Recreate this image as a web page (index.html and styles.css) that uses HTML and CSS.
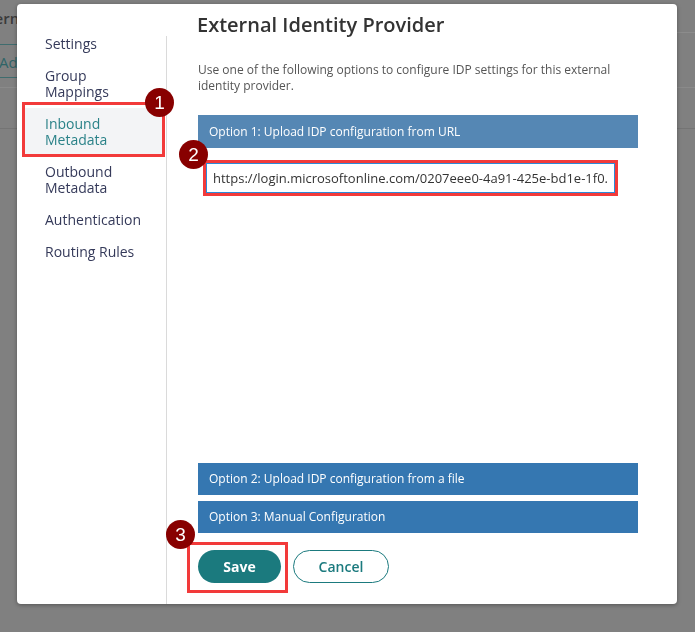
FILE: index.html
```html
<!DOCTYPE html>
<html lang="en">

<head>
    <meta charset="UTF-8">
    <meta name="viewport" content="width=device-width, initial-scale=1.0">
    <title>External Identity Provider</title>
    <link rel="stylesheet" href="styles.css">
</head>

<body>

    <!-- page behind the dialog, dimmed -->
    <div class="page">
        <div class="page-head">
            <div class="page-title">External Identity Providers</div>
            <div class="page-tools"></div>
        </div>
        <div class="page-toolbar">
            <span class="page-add">Add</span>
        </div>
        <div class="page-row"></div>
        <div class="page-row"></div>
    </div>

    <div class="modal">
        <div class="side">
            <ul>
                <li>Settings</li>
                <li>Group Mappings</li>
                <li class="active">Inbound Metadata</li>
                <li>Outbound Metadata</li>
                <li>Authentication</li>
                <li>Routing Rules</li>
            </ul>
        </div>

        <div class="content">
            <h1>External Identity Provider</h1>
            <p class="intro">Use one of the following options to configure IDP settings for this external identity provider.</p>

            <div class="option option-open">Option 1: Upload IDP configuration from URL</div>
            <div class="mark-field">
                <input class="url" type="text" value="https://login.microsoftonline.com/0207eee0-4a91-425e-bd1e-1f0.3b5c7d9e/federationmetadata/2007-06/federationmetadata.xml">
            </div>

            <div class="bottom">
                <div class="option">Option 2: Upload IDP configuration from a file</div>
                <div class="option">Option 3: Manual Configuration</div>
                <div class="buttons">
                    <button class="btn btn-save">Save</button>
                    <button class="btn btn-cancel">Cancel</button>
                </div>
            </div>
        </div>

        <!-- tutorial annotations -->
        <div class="mark mark-nav"></div>
        <div class="mark mark-save"></div>
        <div class="badge badge-1">1</div>
        <div class="badge badge-2">2</div>
        <div class="badge badge-3">3</div>
    </div>

</body>

</html>
```

FILE: styles.css
```css
html,
body {
    margin: 0;
    padding: 0;
}

body {
    width: 695px;
    height: 632px;
    overflow: hidden;
    background-color: #808080;
    font-family: 'Open Sans', 'Noto Sans', sans-serif;
}

/* dimmed page */
.page-head {
    display: flex;
    justify-content: space-between;
    height: 45px;
}

.page-title {
    border-bottom: 1px solid #3f6c6e;
    width: 40px;
    height: 44px;
    font-size: 15px;
    font-weight: 600;
    line-height: 36px;
    color: #3a3a3a;
    text-indent: -28px;
    white-space: nowrap;
}

.page-tools {
    width: 30px;
    height: 32px;
    border-bottom: 1px solid #8c8c8c;
}

.page-toolbar {
    width: 40px;
    height: 32px;
    border-bottom: 1px solid #3f6c6e;
}

.page-add {
    display: block;
    margin-left: -1px;
    font-size: 15px;
    line-height: 34px;
    color: #2f6467;
}

.page-row {
    height: 40px;
    border-top: 1px solid #8a8a8a;
    margin-top: 9px;
}

.page-row + .page-row {
    margin-top: 0;
    border-top-color: #747474;
}

/* dialog */
.modal {
    position: fixed;
    left: 17px;
    top: 4px;
    width: 660px;
    height: 600px;
    background-color: #ffffff;
    border-radius: 4px;
    box-shadow: 0 1px 4px rgba(0, 0, 0, .35);
    display: flex;
}

.side {
    width: 149px;
    margin-top: 32px;
    border-right: 1px solid #dadada;
}

.side ul {
    list-style: none;
    margin: -8px 0 0 8px;
    padding: 0;
    width: 138px;
}

.side li {
    padding: 8px 18px 8px 20px;
    font-size: 14px;
    line-height: 16px;
    color: #353a5a;
}

.side li.active {
    background-color: #f3f4f6;
    color: #2a8288;
}

.content {
    flex: 1;
    display: flex;
    flex-direction: column;
    padding: 7px 39px 21px 31px;
}

h1 {
    margin: 0;
    font-size: 20px;
    line-height: 27px;
    font-weight: 600;
    color: #333333;
    margin-left: -1px;
}

.intro {
    margin: 24px 0 0;
    font-size: 12px;
    line-height: 16px;
    color: #555555;
    padding-right: 16px;
}

.option {
    height: 32px;
    padding: 0 11px;
    background-color: #3577b1;
    color: #ffffff;
    font-size: 12px;
    font-weight: 500;
    line-height: 32px;
}

.option-open {
    margin-top: 21px;
    height: 33px;
    line-height: 33px;
    background-color: #5587b4;
}

.mark-field {
    margin: 12px 20px 0 5px;
    border: 3px solid #f23a3a;
}

.url {
    display: block;
    box-sizing: border-box;
    width: 100%;
    height: 30px;
    margin: 0;
    padding: 0 6px;
    border: 1px solid #2b8ad8;
    font-family: 'Open Sans', 'Noto Sans', sans-serif;
    font-size: 13px;
    color: #333333;
    outline: none;
}

.bottom {
    margin-top: auto;
}

.bottom .option + .option {
    margin-top: 6px;
}

.buttons {
    display: flex;
    gap: 12px;
    margin-top: 17px;
}

.btn {
    height: 33px;
    border-radius: 17px;
    font-family: 'Open Sans', 'Noto Sans', sans-serif;
    font-size: 14px;
    padding: 0;
}

.btn-save {
    width: 83px;
    border: none;
    background-color: #1b7a7e;
    color: #ffffff;
    font-weight: 700;
}

.btn-cancel {
    width: 96px;
    border: 1px solid #1b7a7e;
    background-color: #ffffff;
    color: #1b7a7e;
    font-weight: 600;
}

/* annotations */
.mark {
    position: absolute;
    border: 3px solid #f23a3a;
    box-sizing: border-box;
}

.mark-nav {
    left: 5px;
    top: 98px;
    width: 143px;
    height: 55px;
}

.mark-save {
    left: 170px;
    top: 538px;
    width: 101px;
    height: 51px;
}

.badge {
    position: absolute;
    width: 29px;
    height: 29px;
    border-radius: 50%;
    background-color: #880000;
    color: #ffffff;
    font-family: 'Liberation Sans', Arial, sans-serif;
    font-size: 19px;
    line-height: 29px;
    text-align: center;
}

.badge-1 {
    left: 128px;
    top: 84px;
}

.badge-2 {
    left: 162px;
    top: 136px;
}

.badge-3 {
    left: 149px;
    top: 516px;
}
```
